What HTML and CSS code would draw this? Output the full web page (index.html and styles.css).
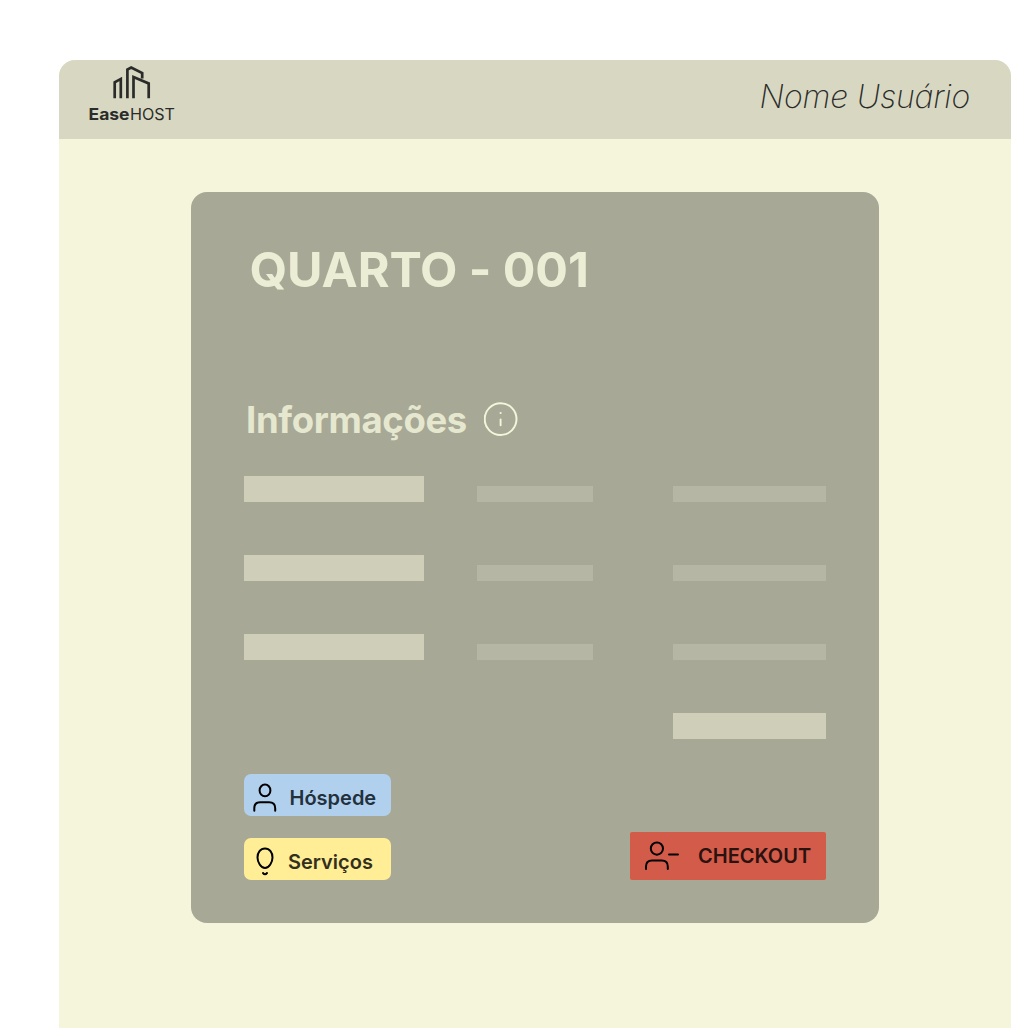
FILE: index.html
```
<!DOCTYPE html>
<html lang="pt-BR">
<head>
<meta charset="utf-8">
<title>EaseHOST - Quarto 001</title>
<link rel="stylesheet" href="styles.css">
</head>
<body>
<div class="app">
  <header class="topbar">
    <div class="brand">
      <svg class="brand-mark" viewBox="0 0 38 34" width="38" height="34" fill="none" stroke="#2b2c2a" stroke-width="2.7">
        <path d="M1.700 33.300V17.200L7.800 13.900V33.300M14.400 33.300V4.600L18.200 2.500L29.200 8V13.500M20.500 33.300V12L35.700 18.400V33.300"/>
      </svg>
      <svg class="brand-name" width="88" height="20" viewBox="0 0 88 20">
        <text class="ease" x="0.500" y="15" textLength="41" lengthAdjust="spacingAndGlyphs">Ease</text>
        <text class="host" x="42" y="15" textLength="45" lengthAdjust="spacingAndGlyphs">HOST</text>
      </svg>
    </div>
    <div class="user">Nome Usuário</div>
  </header>
  <main class="card">
    <h1 class="title">QUARTO - 001</h1>
    <div class="section-head">
      <h2 class="subtitle">Informações</h2>
      <svg width="34" height="34" viewBox="0 0 34 34" fill="none" stroke="#f5f5dc" stroke-width="2" stroke-linecap="round">
        <circle cx="16.600" cy="17.100" r="15.900"/>
        <path d="M16.600 17.500v5.800" stroke-width="1.900"/>
        <circle cx="16.600" cy="11" r="1.100" fill="#f5f5dc" stroke="none"/>
      </svg>
    </div>
    <div class="info">
      <i class="bar strong"></i><i class="bar"></i><i class="bar"></i>
      <i class="bar strong"></i><i class="bar"></i><i class="bar"></i>
      <i class="bar strong"></i><i class="bar"></i><i class="bar"></i>
      <i class="bar strong total"></i>
    </div>
    <footer class="actions">
      <div class="links">
        <button class="btn guest">
          <svg width="26" height="30" viewBox="0 0 26 30" fill="none" stroke="#000" stroke-width="2" stroke-linecap="round">
            <ellipse cx="13" cy="7.400" rx="5.400" ry="5.900"/>
            <path d="M2.300 27.700V25.200Q2.300 19.200 8.300 19.200H17Q23.200 19.200 23.200 25.200V27.700"/>
          </svg>
          <span>Hóspede</span>
        </button>
        <button class="btn services">
          <svg width="26" height="30" viewBox="0 0 26 30" fill="none" stroke="#000" stroke-width="2" stroke-linecap="round">
            <path d="M13 1.500C8.300 1.500 5.500 5.800 5.500 10.400C5.500 15.200 8.900 21 13 21S20.500 15.200 20.500 10.400C20.500 5.800 17.700 1.500 13 1.500Z"/>
            <path d="M11 26Q13 28.400 15 26"/>
          </svg>
          <span>Serviços</span>
        </button>
      </div>
      <button class="btn checkout">
        <svg width="36" height="30" viewBox="0 0 36 30" fill="none" stroke="#000" stroke-width="2" stroke-linecap="round">
          <circle cx="12.900" cy="7.600" r="6.100"/>
          <path d="M2 28V25.500Q2 19.400 8 19.400H17.800Q23.800 19.400 23.800 25.500V28M25 13.600H34"/>
        </svg>
        <span>CHECKOUT</span>
      </button>
    </footer>
  </main>
</div>
</body>
</html>
```
FILE: styles.css
```
* {
  box-sizing: border-box;
}

body {
  margin: 0;
  padding: 60px 0 0 59px;
  height: 1028px;
  overflow: hidden;
  background: #fff;
  font-family: Inter, sans-serif;
}

.app {
  width: 952px;
  height: 968px;
  border-radius: 16px 16px 0 0;
  background: #f5f5dc;
  overflow: hidden;
}

.topbar {
  display: flex;
  justify-content: space-between;
  height: 79px;
  padding: 5px 41px 0 29px;
  background: #d8d8c2;
}

.brand {
  width: 88px;
}

.brand-mark {
  display: block;
  margin-left: 25px;
}

.brand-name {
  display: block;
  margin-top: 6px;
  font-size: 15.500px;
  fill: #2b2c2a;
}

.ease {
  font-weight: 700;
}

.host {
  font-weight: 400;
}

.user {
  padding-top: 12px;
  font-size: 32px;
  font-style: italic;
  font-weight: 200;
  line-height: 40px;
  letter-spacing: -0.150px;
  white-space: nowrap;
  color: #2b2c2a;
}

.card {
  width: 688px;
  height: 731px;
  margin: 52.500px 0 0 132px;
  padding: 53.500px 53px 43px;
  border-radius: 16px;
  background: #a7a896;
}

.title {
  margin: 0 0 0 5.500px;
  font-size: 48.500px;
  font-weight: 700;
  line-height: 49px;
  letter-spacing: -0.100px;
  white-space: nowrap;
  color: #ecedd5;
}

.section-head {
  display: flex;
  align-items: center;
  height: 34px;
  margin: 108px 0 0 2px;
}

.subtitle {
  width: 237.500px;
  margin: 0;
  font-size: 36.500px;
  font-weight: 700;
  line-height: 34px;
  letter-spacing: -0.350px;
  padding-top: 1px;
  white-space: nowrap;
  color: #e6e7cf;
}

.info {
  display: grid;
  grid-template-columns: 180px 142.500px 153.500px;
  grid-auto-rows: 26.500px;
  column-gap: 53px;
  row-gap: 52.500px;
  align-items: end;
  margin-top: 39.500px;
}

.bar {
  width: 116px;
  height: 16px;
  background: #b5b6a4;
}

.bar:nth-child(3n) {
  width: auto;
}

.bar.strong {
  width: auto;
  height: 26.500px;
  background: #cfceb9;
}

.bar.total {
  grid-column: 3;
}

.actions {
  display: flex;
  justify-content: space-between;
  align-items: flex-end;
  margin-top: 35px;
}

.links {
  display: grid;
  gap: 22px;
}

.btn {
  display: flex;
  align-items: center;
  border: 0;
  padding: 0;
  font: 600 20px/24px Inter, sans-serif;
  white-space: nowrap;
}

.links .btn {
  width: 147px;
  height: 42px;
  padding: 6px 0 0 8px;
  border-radius: 7px;
}

.guest {
  gap: 11.500px;
  background: #b1d0ee;
  color: #22313c;
}

.services {
  gap: 10px;
  background: #ffee96;
  color: #332f1d;
}

.checkout {
  width: 196px;
  height: 48px;
  padding-left: 14px;
  gap: 18px;
  border-radius: 2px;
  background: #d35b4a;
  color: #2a120f;
}
```
